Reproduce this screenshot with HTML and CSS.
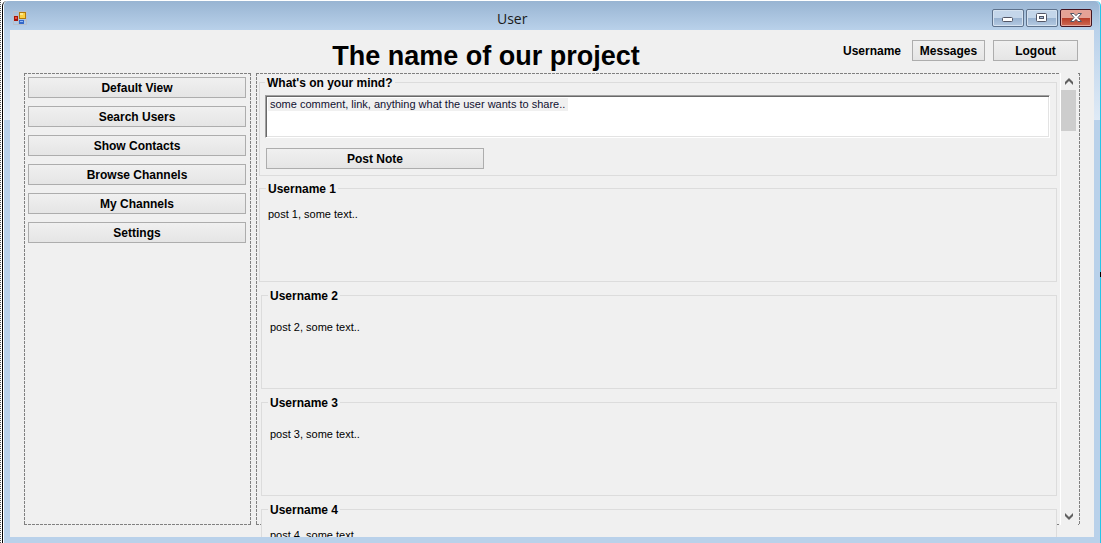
FILE: index.html
```html
<!DOCTYPE html>
<html lang="en">
<head>
<meta charset="utf-8">
<title>User</title>
<link rel="stylesheet" href="styles.css">
</head>
<body>
<div class="window">
  <header class="titlebar">
    <svg class="app-icon" width="14" height="14" viewBox="0 0 14 14" aria-hidden="true">
      <path d="M.5.5h13v13H.5zM5.500.5v13M.5 4.500h13M.5 9.500h13" fill="none" stroke="#b9bfc9"/>
      <rect x="1" y="5" width="4" height="5" fill="#a51408"/><rect x="2" y="6" width="2" height="2" fill="#e85040"/>
      <rect x="6" y="1" width="7" height="7" fill="#b37a08"/><rect x="7" y="2" width="5" height="5" fill="#fbd040"/><rect x="7" y="2" width="3" height="2" fill="#ffe88a"/>
      <rect x="6" y="9" width="5" height="4" fill="#3468c8"/><rect x="7" y="10" width="3" height="1" fill="#8fb8f8"/>
    </svg>
    <span class="caption">User</span>
    <div class="controls">
      <button class="control" type="button" aria-label="Minimize"><svg width="12" height="12" viewBox="0 0 12 12"><rect x=".5" y="5.500" width="10" height="4" rx="1" fill="#fff" stroke="#535666"/></svg></button>
      <button class="control" type="button" aria-label="Maximize"><svg width="12" height="12" viewBox="0 0 12 12"><rect x=".5" y="1.500" width="10" height="8" rx="1" fill="#fff" stroke="#535666"/><rect x="3.500" y="4.500" width="4" height="2" fill="#a9c1dc" stroke="#535666"/></svg></button>
      <button class="control close" type="button" aria-label="Close"><svg width="12" height="12" viewBox="0 0 12 12"><path d="M.5 1.500h3.500l2 2.200 2-2.200h3.500L8 5.500l3.500 4H8L6 7.300 4 9.500H.5L4 5.500z" fill="#fff" stroke="#535666"/></svg></button>
    </div>
  </header>
  <main class="client">
    <div class="top">
      <h1 class="project">The name of our project</h1>
      <div class="account">
        <span class="who">Username</span>
        <button class="btn messages" type="button">Messages</button>
        <button class="btn logout" type="button">Logout</button>
      </div>
    </div>
    <div class="columns">
      <nav class="panel menu">
        <button class="btn" type="button">Default View</button>
        <button class="btn" type="button">Search Users</button>
        <button class="btn" type="button">Show Contacts</button>
        <button class="btn" type="button">Browse Channels</button>
        <button class="btn" type="button">My Channels</button>
        <button class="btn" type="button">Settings</button>
      </nav>
      <section class="panel feed">
        <fieldset class="group composer">
          <legend>What's on your mind?</legend>
          <div class="note">
            <textarea class="note-input" id="note"></textarea>
            <label class="note-label" for="note">some comment, link, anything what the user wants to share..</label>
          </div>
          <button class="btn post-note" type="button">Post Note</button>
        </fieldset>
        <div class="posts">
          <fieldset class="group post near"><legend>Username 1</legend><p class="text">post 1, some text..</p></fieldset>
          <fieldset class="group post"><legend>Username 2</legend><p class="text">post 2, some text..</p></fieldset>
          <fieldset class="group post"><legend>Username 3</legend><p class="text">post 3, some text..</p></fieldset>
          <fieldset class="group post near"><legend>Username 4</legend><p class="text">post 4, some text..</p></fieldset>
        </div>
        <div class="scrollbar">
          <button class="arrow" type="button" aria-label="Scroll up"><svg width="8" height="7" viewBox="0 0 8 7"><path d="M0 7V4l4-4 4 4v3L4 3z" fill="#606060"/></svg></button>
          <div class="thumb"></div>
          <button class="arrow down" type="button" aria-label="Scroll down"><svg width="8" height="7" viewBox="0 0 8 7"><path d="M0 0v3l4 4 4-4V0L4 4z" fill="#606060"/></svg></button>
        </div>
      </section>
    </div>
  </main>
  <span class="grip"></span>
</div>
</body>
</html>
```
FILE: styles.css
```css
* { box-sizing: border-box; }

body {
  margin: 0;
  padding: 1px 0 0 2px;
  height: 100vh;
  overflow: hidden;
  background: repeating-linear-gradient(#555 0 1px, #fff 1px 2px) 0 0 / 1px 100% no-repeat #fff;
  font-family: "Liberation Sans", Arial, sans-serif;
  font-size: 11px;
  color: #000;
}

button { font: inherit; color: inherit; padding: 0; }

.window {
  position: relative;
  height: 100%;
  display: flex;
  flex-direction: column;
  padding: 0 6px 6px 7px;
  border-left: 1px solid #000;
  border-right: 1px solid #27c5e8;
  border-radius: 5px 5px 0 0;
  box-shadow: inset 1px 0 #fff;
  background:
    linear-gradient(#b9d1ea, #dfeaf6) 0 29px / 100% 90px no-repeat,
    #b9d1ea;
}

.titlebar {
  flex: none;
  height: 29px;
  margin: 0 -5px 0 -6px;
  padding: 0 7px 0 9px;
  display: grid;
  grid-template-columns: 6fr auto 7fr;
  align-items: center;
  border-radius: 5px 5px 0 0;
  background: linear-gradient(#98b4d2, #b9d1ea);
}

.caption {
  font: 14px/20px "Open Sans", sans-serif;
  padding-top: 6px;
  color: #1a1a1a;
}

.app-icon { margin-top: 5px; }

.controls { display: flex; justify-content: flex-end; gap: 2px; padding-top: 4px; }

.control {
  width: 32px;
  height: 18px;
  display: flex;
  align-items: center;
  justify-content: center;
  border: 1px solid #5e728c;
  border-radius: 2px;
  box-shadow: inset 0 0 0 1px #d5e2f0;
  background: linear-gradient(#c4d6ea 0 50%, #98b2d0 50%, #b5cae2);
}

.close {
  border-color: #431420;
  box-shadow: inset 0 0 0 1px #e5a59a;
  background: linear-gradient(#e5a295 0 50%, #b83c26 50%, #cd6a55);
}

.client {
  flex: 1;
  min-height: 0;
  display: flex;
  flex-direction: column;
  padding: 0 14px 12px;
  overflow: hidden;
  background: #f0f0f0;
}

.top {
  flex: none;
  height: 43px;
  display: grid;
  grid-template-columns: 7fr auto 10fr;
  align-items: start;
}

.project {
  grid-column: 2;
  margin: 0;
  padding: 10px 0 0;
  font-size: 27px;
  line-height: 32px;
  font-weight: 700;
}

.account {
  display: flex;
  justify-content: flex-end;
  align-items: center;
  gap: 8px;
  padding: 10px 2px 0 0;
  font-size: 12px;
  font-weight: 700;
}

.who { margin-right: 3px; }

.btn {
  height: 21px;
  padding-top: 1px;
  border: 1px solid #adadad;
  background: linear-gradient(#f0f0f0, #e5e5e5);
  font-size: 12px;
  font-weight: 700;
  line-height: 18px;
}

.messages { width: 73px; }
.logout { width: 85px; }

.columns {
  flex: 1;
  min-height: 0;
  display: grid;
  grid-template-columns: 227px minmax(0, 1fr);
  grid-template-rows: minmax(0, 1fr);
  gap: 5px;
}

.panel {
  --h: repeating-linear-gradient(90deg, #808080 0 3px, transparent 3px 4px);
  --v: repeating-linear-gradient(#808080 0 3px, transparent 3px 4px);
  background:
    var(--h) 0 0 / 100% 1px no-repeat,
    var(--h) 0 100% / 100% 1px no-repeat,
    var(--v) 0 0 / 1px 100% no-repeat,
    var(--v) 100% 0 / 1px 100% no-repeat;
}

.menu {
  display: flex;
  flex-direction: column;
  gap: 8px;
  padding: 4px 5px 4px 4px;
}

.feed {
  position: relative;
  display: flex;
  flex-direction: column;
  gap: 5px;
  padding: 2px 23px 0 3px;
}

.group {
  flex: none;
  min-width: 0;
  height: 101px;
  margin: 0;
  padding: 0 6px;
  border: 1px solid #dcdcdc;
}

.group legend {
  padding: 2px 2px 0;
  font-size: 12px;
  line-height: 13px;
  font-weight: 700;
}

.composer { padding: 5px 6px 0 5px; }

.note { position: relative; }

.note-input {
  display: block;
  width: 100%;
  height: 43px;
  resize: none;
  border: 1px solid;
  border-color: #a0a0a0 #fff #fff #a0a0a0;
  outline: none;
  background: #fff;
  box-shadow: inset 1px 1px #696969, inset -1px -1px #e3e3e3;
}

.note-label {
  position: absolute;
  left: 3px;
  top: 3px;
  padding: 0 3px 0 2px;
  line-height: 13px;
  background: #f0f0f0;
  color: #101030;
}

.post-note {
  display: block;
  width: 218px;
  margin: 10px 0 0 1px;
}

.posts {
  flex: none;
  display: flex;
  flex-direction: column;
  gap: 6px;
}

.post { background: #f0f0f0; }
.post + .post { margin-left: 2px; }

.text {
  margin: 0;
  padding: 18px 2px 0;
  line-height: 13px;
}

.near .text { padding-top: 12px; }

.scrollbar {
  position: absolute;
  top: 0;
  bottom: 0;
  right: 2px;
  width: 18px;
  display: flex;
  flex-direction: column;
  border-left: 1px solid #fff;
  background: #f0f0f0;
}

.arrow {
  height: 17px;
  width: 16px;
  display: flex;
  align-items: center;
  justify-content: center;
  border: 0;
  background: none;
}

.down { margin-top: auto; }

.thumb { width: 15px; height: 41px; background: #cdcdcd; }

.grip {
  position: absolute;
  right: -1px;
  top: 50%;
  width: 1px;
  height: 5px;
  background: #000;
}
```
